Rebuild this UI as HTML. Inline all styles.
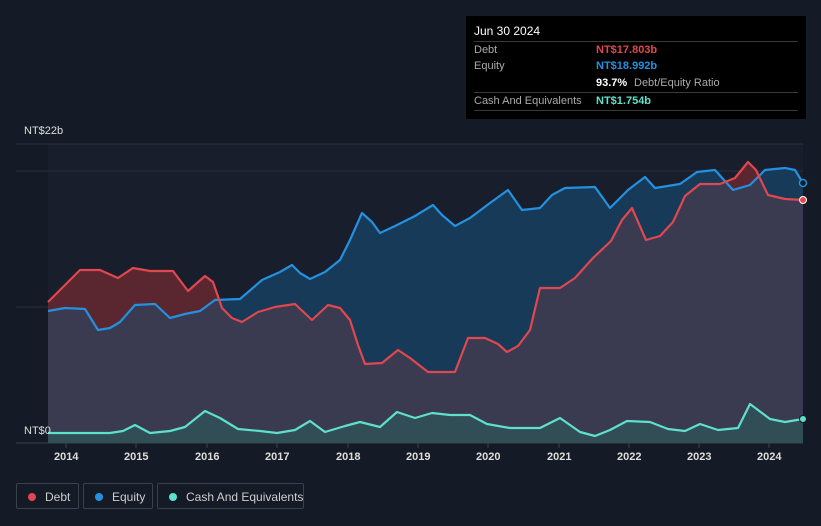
<!DOCTYPE html><html><head><meta charset="utf-8"><style>
body{margin:0;width:821px;height:526px;background:#151b26;font-family:"Liberation Sans",sans-serif;overflow:hidden;position:relative}
.tt{position:absolute;left:466px;top:16px;width:340px;height:103px;background:#000;color:#fff;font-size:11px}
.tt .r{position:absolute;left:8px;right:8px;border-top:1px solid #3a3a3a;height:17px;line-height:17px;color:#aaa}
.tt .v{position:absolute;left:122px;font-weight:bold}
.leg{position:absolute;top:483px;height:26px;border:1px solid #3b404c;border-radius:2px;color:#ccc;font-size:12px;line-height:26px;box-sizing:border-box;white-space:nowrap}
.leg i{position:absolute;top:9px;left:11px;width:8px;height:8px;border-radius:50%}
.leg span{position:absolute;left:28px;white-space:nowrap}
.ax{position:absolute;top:451px;color:#ddd;font-size:11px;font-weight:bold}
</style></head><body>
<svg width="821" height="526" style="position:absolute;left:0;top:0">
<defs><clipPath id="eq"><polygon points="48,311 65,308 85,309 98,330 110,328 120,322 135,305 155,304 170,318 185,314 200,311 215,300 240,299 262,280 280,272 292,265 300,273 310,279 325,272 340,260 350,240 362,213 372,222 380,233 395,226 415,216 433,205 442,215 455,226 470,218 490,203 508,190 522,210 540,208 552,195 565,188 595,187 610,208 628,190 645,177 655,188 680,184 697,172 715,170 733,190 750,185 765,170 785,168 795,170 803,183 803,443 48,443"/></clipPath></defs>
<rect x="48" y="144" width="755" height="299" fill="#181e2b"/>
<line x1="16" y1="144" x2="803" y2="144" stroke="#2a303b"/>
<line x1="16" y1="171" x2="803" y2="171" stroke="#2a303b"/>
<line x1="16" y1="307" x2="803" y2="307" stroke="#2a303b"/>
<line x1="16" y1="443" x2="803" y2="443" stroke="#3a404b"/>
<polygon fill="#163a58" points="48,311 65,308 85,309 98,330 110,328 120,322 135,305 155,304 170,318 185,314 200,311 215,300 240,299 262,280 280,272 292,265 300,273 310,279 325,272 340,260 350,240 362,213 372,222 380,233 395,226 415,216 433,205 442,215 455,226 470,218 490,203 508,190 522,210 540,208 552,195 565,188 595,187 610,208 628,190 645,177 655,188 680,184 697,172 715,170 733,190 750,185 765,170 785,168 795,170 803,183 803,443 48,443"/>
<polygon fill="#5a2730" points="48,302 65,285 80,270 100,270 118,278 133,268 150,271 173,271 188,291 205,276 213,282 222,308 232,318 242,322 258,312 275,307 295,304 312,320 328,305 340,308 350,320 358,345 365,364 382,363 398,350 410,358 428,372 455,372 468,338 485,338 498,344 507,352 518,346 530,330 540,288 560,288 575,278 593,258 611,241 622,220 632,208 646,240 660,236 673,222 685,196 700,184 720,184 735,178 748,162 756,170 768,195 785,199 803,200 803,443 48,443"/>
<polygon clip-path="url(#eq)" fill="#3a3a50" points="48,302 65,285 80,270 100,270 118,278 133,268 150,271 173,271 188,291 205,276 213,282 222,308 232,318 242,322 258,312 275,307 295,304 312,320 328,305 340,308 350,320 358,345 365,364 382,363 398,350 410,358 428,372 455,372 468,338 485,338 498,344 507,352 518,346 530,330 540,288 560,288 575,278 593,258 611,241 622,220 632,208 646,240 660,236 673,222 685,196 700,184 720,184 735,178 748,162 756,170 768,195 785,199 803,200 803,443 48,443"/>
<polygon fill="#2d5558" opacity="0.7" points="48,433 110,433 123,431 135,425 150,433 170,431 185,427 205,411 220,418 238,429 260,431 277,433 295,430 310,421 325,432 345,426 360,422 380,427 397,412 415,418 432,413 450,415 470,415 487,424 510,428 540,428 560,418 580,432 595,436 610,430 627,421 650,422 668,429 685,431 700,424 718,430 738,428 750,404 770,419 785,422 803,419 803,443 48,443"/>
<g fill="none" stroke-width="2.2" stroke-linejoin="round">
<polyline stroke="#2590e0" points="48,311 65,308 85,309 98,330 110,328 120,322 135,305 155,304 170,318 185,314 200,311 215,300 240,299 262,280 280,272 292,265 300,273 310,279 325,272 340,260 350,240 362,213 372,222 380,233 395,226 415,216 433,205 442,215 455,226 470,218 490,203 508,190 522,210 540,208 552,195 565,188 595,187 610,208 628,190 645,177 655,188 680,184 697,172 715,170 733,190 750,185 765,170 785,168 795,170 803,183"/>
<polyline stroke="#e0474f" points="48,302 65,285 80,270 100,270 118,278 133,268 150,271 173,271 188,291 205,276 213,282 222,308 232,318 242,322 258,312 275,307 295,304 312,320 328,305 340,308 350,320 358,345 365,364 382,363 398,350 410,358 428,372 455,372 468,338 485,338 498,344 507,352 518,346 530,330 540,288 560,288 575,278 593,258 611,241 622,220 632,208 646,240 660,236 673,222 685,196 700,184 720,184 735,178 748,162 756,170 768,195 785,199 803,200"/>
<polyline stroke="#5fe0cc" points="48,433 110,433 123,431 135,425 150,433 170,431 185,427 205,411 220,418 238,429 260,431 277,433 295,430 310,421 325,432 345,426 360,422 380,427 397,412 415,418 432,413 450,415 470,415 487,424 510,428 540,428 560,418 580,432 595,436 610,430 627,421 650,422 668,429 685,431 700,424 718,430 738,428 750,404 770,419 785,422 803,419"/>
</g>
<circle cx="803" cy="183" r="3.5" fill="#151b26" stroke="#2590e0" stroke-width="1.5"/>
<circle cx="803" cy="200" r="3.5" fill="#e0474f" stroke="#fff" stroke-width="1"/>
<circle cx="803" cy="419" r="3.5" fill="#5fe0cc" stroke="#151b26" stroke-width="1"/>
<g stroke="#3a404b"><line x1="66" y1="443" x2="66" y2="448"/><line x1="136" y1="443" x2="136" y2="448"/><line x1="207" y1="443" x2="207" y2="448"/><line x1="277" y1="443" x2="277" y2="448"/><line x1="348" y1="443" x2="348" y2="448"/><line x1="418" y1="443" x2="418" y2="448"/><line x1="488" y1="443" x2="488" y2="448"/><line x1="559" y1="443" x2="559" y2="448"/><line x1="629" y1="443" x2="629" y2="448"/><line x1="699" y1="443" x2="699" y2="448"/><line x1="769" y1="443" x2="769" y2="448"/></g>
</svg>
<div style="position:absolute;left:24px;top:125px;color:#ddd;font-size:11px">NT$22b</div>
<div style="position:absolute;left:24px;top:425px;color:#ddd;font-size:11px">NT$0</div>
<div class="ax" style="left:54px">2014</div><div class="ax" style="left:124px">2015</div><div class="ax" style="left:195px">2016</div><div class="ax" style="left:265px">2017</div><div class="ax" style="left:336px">2018</div><div class="ax" style="left:406px">2019</div><div class="ax" style="left:476px">2020</div><div class="ax" style="left:547px">2021</div><div class="ax" style="left:617px">2022</div><div class="ax" style="left:687px">2023</div><div class="ax" style="left:757px">2024</div>
<div class="tt">
<div style="position:absolute;left:8px;top:8px;font-size:12px">Jun 30 2024</div>
<div class="r" style="top:25px">Debt<span class="v" style="color:#e0474f">NT$17.803b</span></div>
<div class="r" style="top:42px;border-top:none">Equity<span class="v" style="color:#2590e0">NT$18.992b</span></div>
<div class="r" style="top:59px;border-top:none"><span class="v" style="color:#fff">93.7%</span><span style="position:absolute;left:160px;color:#aaa">Debt/Equity Ratio</span></div>
<div class="r" style="top:76px">Cash And Equivalents<span class="v" style="color:#5fe0cc">NT$1.754b</span></div>
<div class="r" style="top:94px;height:0"></div>
</div>
<div class="leg" style="left:16px;width:63px"><i style="background:#e0474f"></i><span>Debt</span></div>
<div class="leg" style="left:83px;width:70px"><i style="background:#2590e0"></i><span>Equity</span></div>
<div class="leg" style="left:157px;width:147px"><i style="background:#5fe0cc"></i><span>Cash And Equivalents</span></div>
</body></html>
